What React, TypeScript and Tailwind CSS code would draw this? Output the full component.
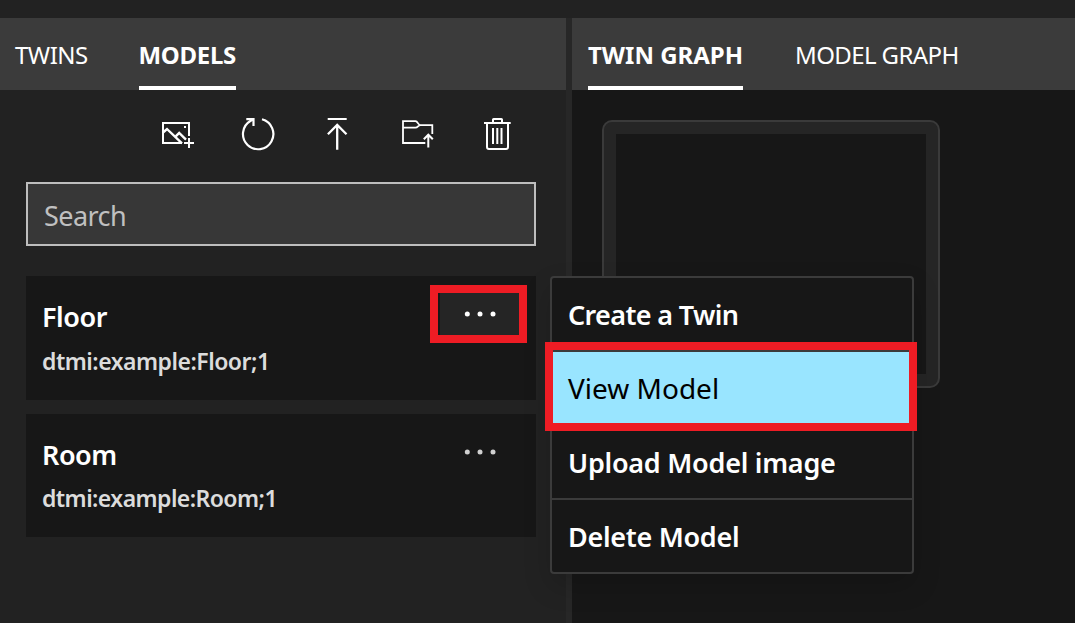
import type { ReactNode } from "react";

function Icon({ x, label, children }: { x: number; label: string; children: ReactNode }) {
  return (
    <button type="button" aria-label={label} className="h-10 w-10">
      <svg
        width="40"
        height="40"
        viewBox={`${x} 114 40 40`}
        fill="none"
        stroke="#fff"
        strokeWidth="2"
        className="block"
      >
        {children}
      </svg>
    </button>
  );
}

function Toolbar() {
  return (
    <div className="flex h-[92px] gap-10 pt-6 pl-[158px]">
      <Icon x={158} label="Upload model images">
        <path d="M182 143H163V123H189V136" />
        <path strokeWidth="2.4" d="M163 132.5L167 129L182 143.3M175 137.2L179.2 133L186 139.6" />
        <path d="M184 143H194M189 138V148" />
        <rect x="184" y="126" width="2" height="2" fill="#fff" stroke="none" />
      </Icon>
      <Icon x={238} label="Refresh">
        <path strokeWidth="2.2" d="M262 119.3A15.2 15.2 0 1 1 250.3 121L253.4 119.2" />
        <path strokeWidth="2.2" d="M246.3 119.2H253.5V126" />
      </Icon>
      <Icon x={318} label="Upload a model">
        <path d="M327.7 119H346.7" />
        <path strokeWidth="2.3" d="M337.2 149.7V125M327.9 134.2L337.2 124.9L346.5 134.2" />
      </Icon>
      <Icon x={398} label="Upload a directory of models">
        <path
          strokeWidth="1.8"
          d="M425.3 143H403V121.2H415.5C418 121.2 417.8 125.2 420.5 125.2H432.3V134M403 127.7H415.5C418 127.7 418 125.2 420.5 125.2"
        />
        <path d="M428.3 147.6V135M423.8 139.2L428.3 134.7L432.8 139.2" />
      </Icon>
      <Icon x={478} label="Delete all models">
        <path d="M484 123H510.7M493 123V119.6Q493 119 493.6 119H501.4Q502 119 502 119.6V123" />
        <path d="M487 123V147Q487 149 489 149H506Q508 149 508 147V123" />
        <path strokeWidth="2" d="M493 128V144M497.3 128V144M501.5 128V144" />
      </Icon>
    </div>
  );
}

function Tab({ className, children }: { className: string; children: ReactNode }) {
  return (
    <div className={`h-[72px] shrink-0 text-2xl leading-[74px] whitespace-nowrap ${className}`}>{children}</div>
  );
}

function ModelCard({ name, id, hovered, className, idClass }: { name: string; id: string; hovered?: boolean; className: string; idClass: string }) {
  return (
    <div className={`flex justify-between bg-[#171717] pr-4 pl-4 ${className}`}>
      <div className="pt-[21px] whitespace-nowrap">
        <div className="text-[27px] leading-[39px] font-semibold tracking-[-0.45px]">{name}</div>
        <div className={`text-[23px] leading-[34px] font-semibold text-[#dcdcdc] ${idClass}`}>{id}</div>
      </div>
      <button
        type="button"
        aria-label="More"
        className={`mt-[17px] flex h-[42px] w-20 items-center justify-center ${hovered ? "bg-[#252525] text-white" : "text-[#d0d0d0]"}`}
      >
        <svg width="32" height="6" viewBox="0 0 32 6" fill="currentColor">
          <circle cx="3.3" cy="3" r="2.5" />
          <circle cx="16" cy="3" r="2.5" />
          <circle cx="29" cy="3" r="2.5" />
        </svg>
      </button>
    </div>
  );
}

function ContextMenu() {
  return (
    <div className="absolute top-[276px] left-[550px] w-[364px] rounded-[4px] border-2 border-[#3b3b3b] bg-[#171717] text-[27px] leading-[73px] font-semibold whitespace-nowrap shadow-[0_12px_28px_rgba(0,0,0,0.16)]">
      <div className="h-[74px] border-b-2 border-[#3b3b3b] pl-4 tracking-[-0.65px]">Create a Twin</div>
      <div className="h-[74px] border-b-2 border-[#3b3b3b] bg-[#99e5ff] pl-4 text-[28px] font-normal text-black">View Model</div>
      <div className="h-[74px] border-b-2 border-[#3b3b3b] pl-4 tracking-[-0.26px]">Upload Model image</div>
      <div className="h-[72px] pl-4 tracking-[-0.3px]">Delete Model</div>
    </div>
  );
}

export default function App() {
  return (
    <div className="relative h-[623px] w-[1075px] overflow-hidden bg-[#222] pt-[18px] font-['Noto_Sans','Open_Sans',sans-serif] text-white">
      <div className="flex h-[605px]">
        <section className="w-[566px] shrink-0">
          <nav className="flex h-[72px] bg-[#3b3b3b]">
            <Tab className="ml-[15px] w-[124px] tracking-[-0.5px]">TWINS</Tab>
            <Tab className="w-[97px] border-b-4 border-white font-bold tracking-[-0.3px]">
              <span className="-ml-[0.5px]">MODELS</span>
            </Tab>
          </nav>
          <Toolbar />
          <div className="px-[26px]">
            <div className="h-16 w-[510px] border-2 border-[#bebebe] bg-[#373737] pl-4 text-[27px] leading-[63px] tracking-[-0.55px] text-[#c0c0c0]">
              Search
            </div>
            <ModelCard name="Floor" id="dtmi:example:Floor;1" hovered className="mt-[30px] h-[124px] w-[510px]" idClass="mt-2 tracking-[-0.5px]" />
            <ModelCard name="Room" id="dtmi:example:Room;1" className="mt-[14px] h-[123px] w-[510px]" idClass="mt-[7px] tracking-[-0.56px]" />
          </div>
        </section>
        <div className="w-[6px] shrink-0 bg-[#272727]" />
        <section className="flex-1 bg-[#171717]">
          <nav className="flex h-[72px] bg-[#3b3b3b]">
            <Tab className="ml-4 w-[155px] border-b-4 border-white font-bold">TWIN GRAPH</Tab>
            <Tab className="ml-[52px] tracking-[-0.6px]">MODEL GRAPH</Tab>
          </nav>
          <div className="mt-[30px] ml-[30px] h-[268px] w-[338px] rounded-[10px] border-2 border-[#3a3a3a] bg-[#252525] p-3">
            <div className="h-full bg-[#171717]" />
          </div>
        </section>
      </div>
      <ContextMenu />
      <div className="absolute top-[285px] left-[430px] h-[58px] w-[97px] border-8 border-[#ee1c24]" />
      <div className="absolute top-[342px] left-[545px] h-[89px] w-[372px] border-8 border-[#ee1c24]" />
    </div>
  );
}
